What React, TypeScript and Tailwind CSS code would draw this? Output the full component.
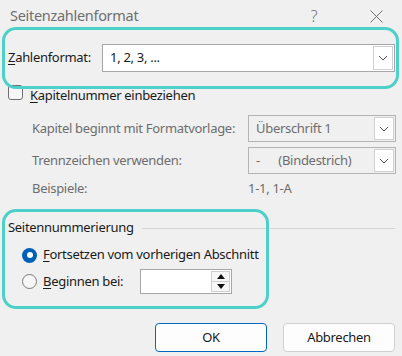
import React from 'react';

function Chevron() {
  return (
    <svg width="10" height="6" viewBox="0 0 10 6" className="block">
      <path d="M1 1 L5 5 L9 1" fill="none" stroke="#555" strokeWidth="1" />
    </svg>
  );
}

function Combo({ value, disabled, className }: { value: React.ReactNode; disabled?: boolean; className: string }) {
  return (
    <div
      className={`flex items-stretch border ${disabled ? 'border-[#b4b4b4] bg-[#f0f0f0] text-[#6d6d6d]' : 'border-[#a6a6a6] bg-white text-[#1a1a1a]'} ${className}`}
    >
      <div className="flex-1 flex items-center pl-[7px] whitespace-pre">{value}</div>
      <div className="my-[1px] mr-[1px] w-[20px] flex items-center justify-center bg-white border border-[#d0d0d0]">
        <Chevron />
      </div>
    </div>
  );
}

function Radio({ checked }: { checked?: boolean }) {
  if (checked)
    return (
      <span className="w-[15px] h-[15px] rounded-full bg-[#005fb8] flex items-center justify-center">
        <span className="w-[6px] h-[6px] rounded-full bg-white" />
      </span>
    );
  return <span className="w-[15px] h-[15px] rounded-full border border-[#7a7a7a] bg-[#f6f6f6]" />;
}

function Arrow({ up }: { up?: boolean }) {
  return (
    <svg width="8" height="5" viewBox="0 0 8 5" className="block">
      <path d={up ? 'M0 5 L4 0 L8 5 Z' : 'M0 0 L8 0 L4 5 Z'} fill="#111" />
    </svg>
  );
}

export default function App() {
  return (
    <div className="relative w-[402px] h-[356px] overflow-hidden bg-[#f0f0f0] text-[13px] tracking-[-0.3px] text-[#1a1a1a] font-['Noto_Sans',sans-serif]">
      {/* title bar */}
      <div className="h-[32px] flex items-center pl-[10px] text-[14.5px] text-[#6f6f6f]">
        <span className="flex-1">Seitenzahlenformat</span>
        <span className="w-[12px] mr-[50px] text-center text-[16px] font-light">?</span>
        <svg width="13" height="13" viewBox="0 0 13 13" className="mr-[19px]">
          <path d="M0.5 0.5 L12.5 12.5 M12.5 0.5 L0.5 12.5" stroke="#707070" strokeWidth="1" />
        </svg>
      </div>

      {/* Zahlenformat */}
      <div className="mt-[12px] h-[28px] flex items-center pl-[8px] pr-[7px]">
        <span className="w-[94px]">
          <span className="underline underline-offset-2">Z</span>ahlenformat:
        </span>
        <Combo value="1, 2, 3, ..." className="flex-1 h-[28px]" />
      </div>

      {/* checkbox */}
      <div className="mt-[13px] h-[15px] flex items-center pl-[8px]">
        <span className="w-[15px] h-[15px] rounded-[3px] border border-[#6f6f6f] bg-[#f7f7f7]" />
        <span className="ml-[7px] relative top-[3px]">
          <span className="underline underline-offset-2">K</span>apitelnummer einbeziehen
        </span>
      </div>

      {/* disabled block */}
      <div className="pl-[32px] pr-[6px] text-[#6d6d6d]">
        <div className="mt-[15px] h-[27px] flex items-center">
          <span className="w-[216px] whitespace-nowrap">Kapitel beginnt mit Formatvorlage:</span>
          <Combo disabled value="Überschrift 1" className="flex-1 h-[27px]" />
        </div>
        <div className="mt-[5px] h-[27px] flex items-center">
          <span className="w-[216px] whitespace-nowrap">Trennzeichen verwenden:</span>
          <Combo disabled value={'-      (Bindestrich)'} className="flex-1 h-[27px]" />
        </div>
        <div className="mt-[5px] h-[20px] flex items-center">
          <span className="w-[216px]">Beispiele:</span>
          <span>1-1, 1-A</span>
        </div>
      </div>

      {/* group */}
      <div className="mt-[19px] h-[20px] flex items-center pl-[8px] pr-[7px]">
        <span>Seitennummerierung</span>
        <span className="flex-1 ml-[8px] h-px bg-[#d6d6d6]" />
      </div>
      <div className="mt-[7px] h-[20px] flex items-center pl-[22px]">
        <Radio checked />
        <span className="ml-[6px]">
          <span className="underline underline-offset-2">F</span>ortsetzen vom vorherigen Abschnitt
        </span>
      </div>
      <div className="mt-[4px] h-[25px] flex items-center pl-[22px]">
        <Radio />
        <span className="ml-[6px] w-[97px]">
          <span className="underline underline-offset-2">B</span>eginnen bei:
        </span>
        <div className="w-[92px] h-[25px] border border-[#a6a6a6] bg-white flex justify-end">
          <div className="w-[20px] flex flex-col py-[1px] pr-[1px]">
            <div className="flex-1 flex items-center justify-center border border-[#cfcfcf] bg-[#f7f7f7]">
              <Arrow up />
            </div>
            <div className="flex-1 flex items-center justify-center border border-t-0 border-[#cfcfcf] bg-[#f7f7f7]">
              <Arrow />
            </div>
          </div>
        </div>
      </div>

      {/* buttons */}
      <div className="mt-[29px] h-[29px] flex justify-end gap-[16px] pr-[7px]">
        <button className="w-[112px] h-[29px] rounded-[4px] border border-[#0067c0] bg-[#fdfdfd] text-[#1a1a1a]">OK</button>
        <button className="w-[112px] h-[29px] rounded-[4px] border border-[#d0d0d0] bg-[#fdfdfd] text-[#1a1a1a]">Abbrechen</button>
      </div>

      {/* highlight annotations */}
      <div className="absolute left-[2px] top-[27px] w-[397px] h-[62px] rounded-[14px] border-[3px] border-[#4dd0c9]" />
      <div className="absolute left-[2px] top-[209px] w-[267px] h-[100px] rounded-[14px] border-[3px] border-[#4dd0c9]" />
    </div>
  );
}
